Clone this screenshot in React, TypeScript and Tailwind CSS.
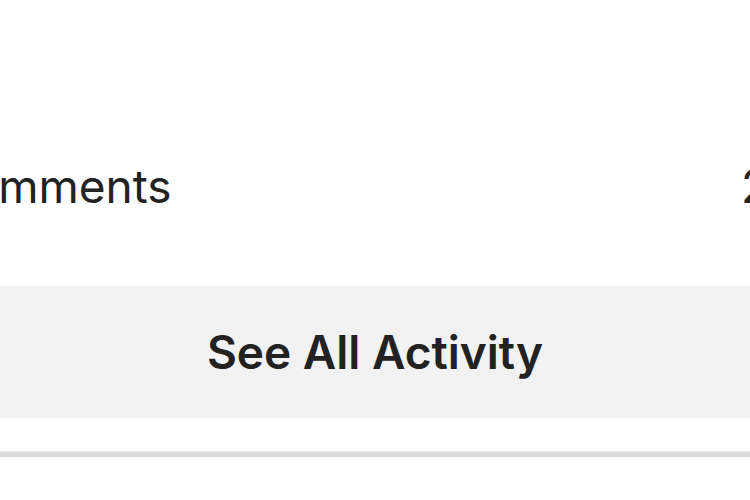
export default function App() {
  return (
    <div className="w-[750px] h-[500px] bg-white overflow-hidden font-['Inter',sans-serif] text-[#222222]">
      <div className="h-[150px]" />
      <div className="-ml-[63px] w-[900px] flex items-end justify-between h-[59px]">
        <span className="text-[46px] leading-none">Comments</span>
        <span className="text-[46px] leading-none w-[96px]">2</span>
      </div>
      <div className="h-[77px]" />
      <div className="-ml-[20px] w-[790px] h-[132px] bg-[#f2f2f2] flex items-center justify-center">
        <span className="text-[46px] font-semibold leading-none">See All Activity</span>
      </div>
      <div className="h-[33px]" />
      <div className="h-[6px] bg-[#dadada] border-t border-[#ececec]" />
    </div>
  );
}
